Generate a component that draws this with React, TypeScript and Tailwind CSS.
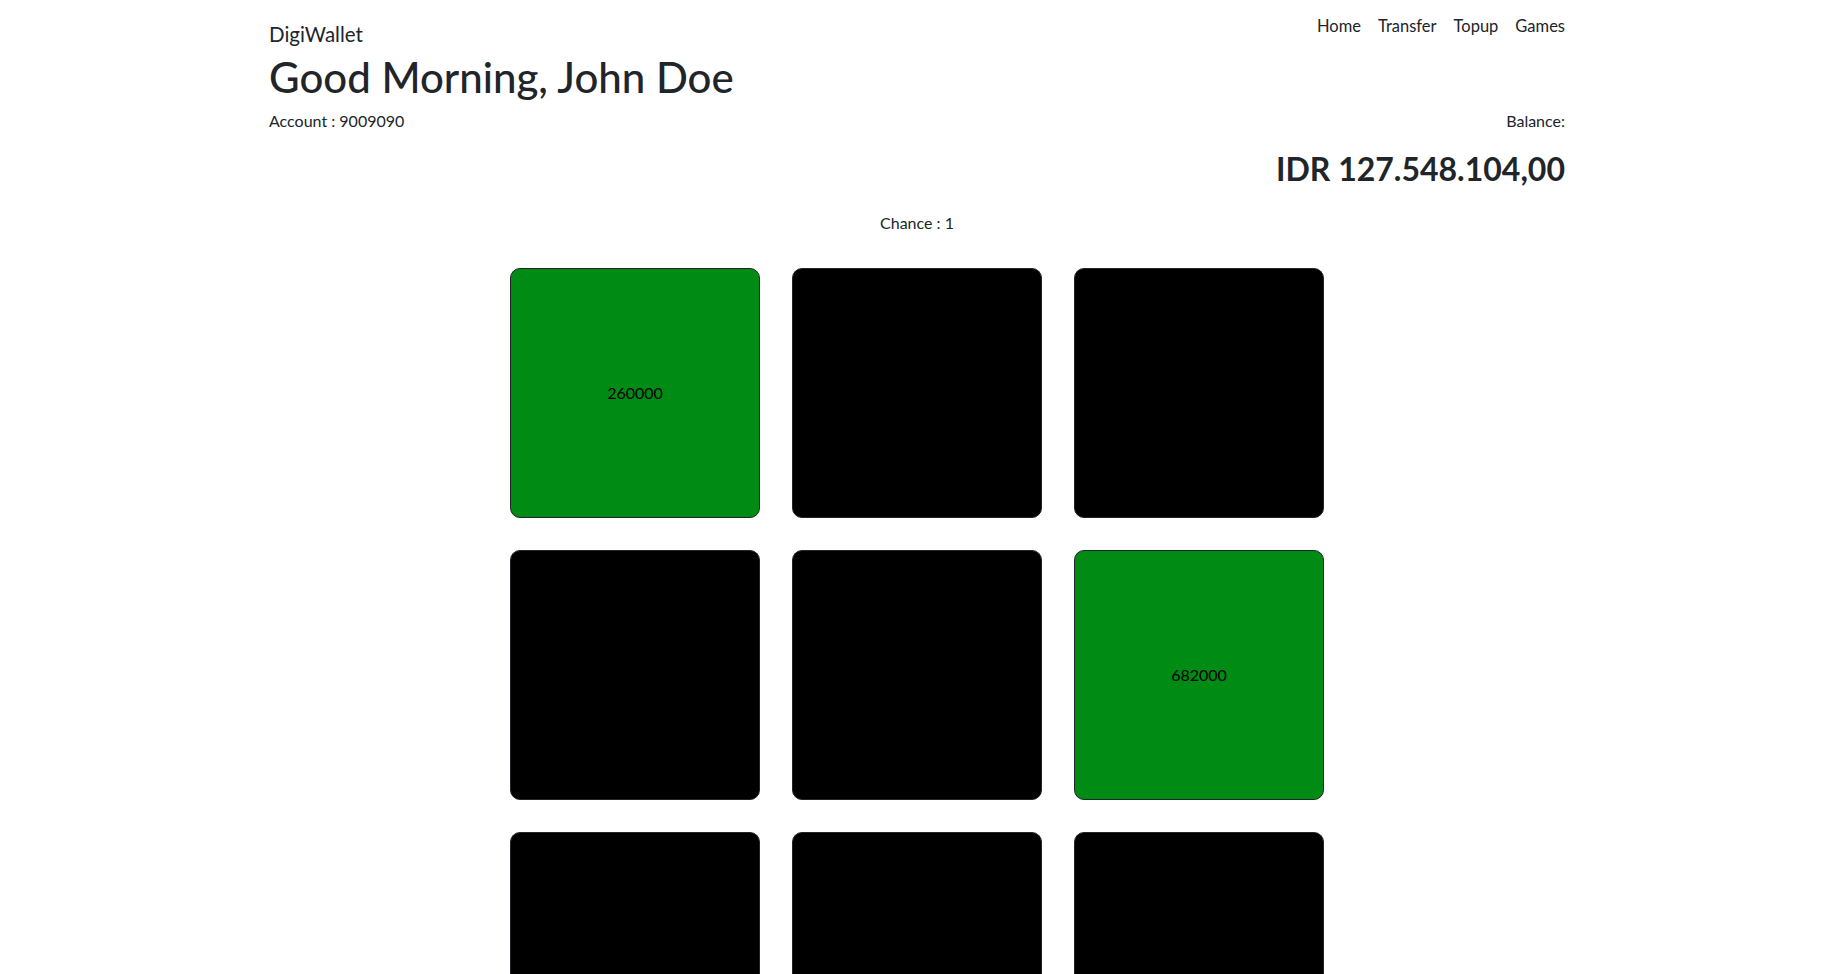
import React from "react";

const tiles: (string | null)[] = ["260000", null, null, null, null, "682000", null, null, null];

export default function App() {
  return (
    <div className="min-h-screen bg-white pl-[5px] font-['Lato','Noto_Sans',sans-serif] text-[#212529]">
      <div className="mx-auto w-[1296px]">
        <header className="flex items-start justify-between pt-[14px]">
          <div className="mt-[5px] text-[20.5px] leading-[30px]">DigiWallet</div>
          <nav className="flex gap-[17px] text-[16.5px] leading-[24px]">
            <a>Home</a>
            <a>Transfer</a>
            <a>Topup</a>
            <a>Games</a>
          </nav>
        </header>
        <h1 className="mt-[3px] text-[42px] font-medium leading-[1.2]">Good Morning, John Doe</h1>
        <div className="mt-[7px] flex justify-between text-[16px] leading-[24px]">
          <span>Account : 9009090</span>
          <span>Balance:</span>
        </div>
        <div className="mt-[17px] text-right text-[32px] font-bold leading-[1.2]">IDR 127.548.104,00</div>
        <div className="mt-[22px] text-center text-[16px] leading-[24px]">Chance : 1</div>
        <div className="mt-[33px] grid grid-cols-[repeat(3,250px)] justify-center gap-[32px] pb-[40px]">
          {tiles.map((t, i) => (
            <div
              key={i}
              className={
                t
                  ? "flex h-[250px] items-center justify-center rounded-[10px] border border-[#212529] bg-[#008c14] text-[16px] text-black"
                  : "flex h-[250px] items-center justify-center rounded-[10px] border border-[#212529] bg-black"
              }
            >
              {t}
            </div>
          ))}
        </div>
      </div>
    </div>
  );
}
